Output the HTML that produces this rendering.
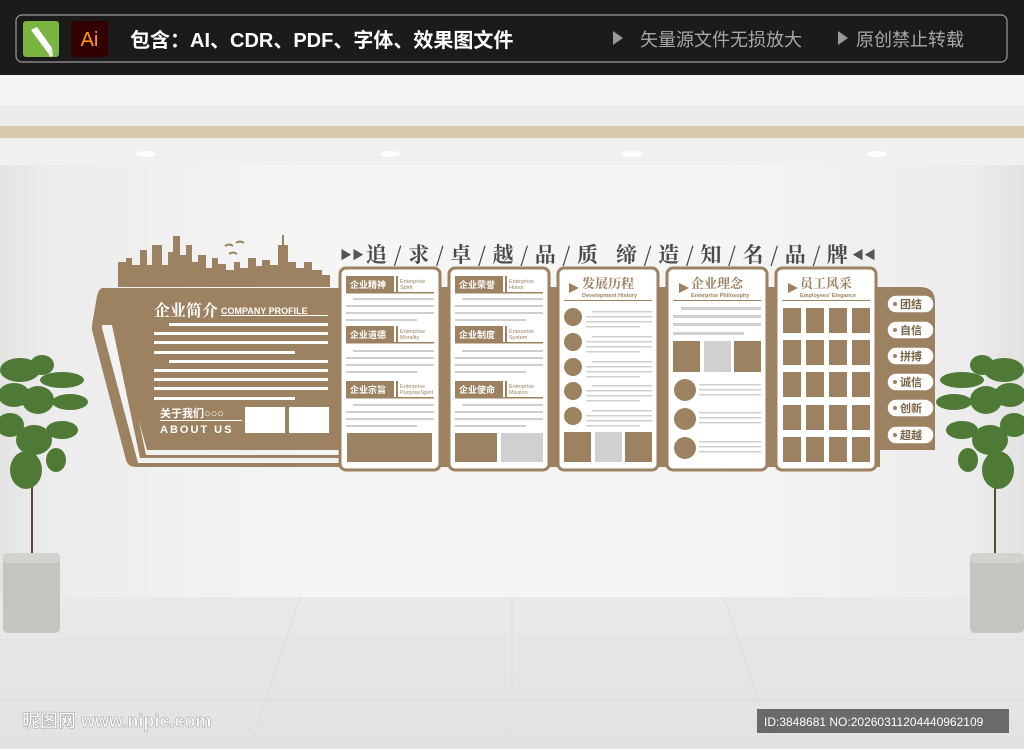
<!DOCTYPE html>
<html><head><meta charset="utf-8"><style>
html,body{margin:0;padding:0;width:1024px;height:749px;overflow:hidden;background:#eee}
svg{display:block}
text{font-family:"Liberation Sans","Noto Sans CJK SC",sans-serif}
.s{font-family:"Noto Serif CJK SC","Liberation Serif",serif;font-weight:bold}
</style></head><body>
<svg width="1024" height="749" viewBox="0 0 1024 749" xmlns="http://www.w3.org/2000/svg">
<defs>
<linearGradient id="wall" x1="0" x2="1" y1="0" y2="0">
<stop offset="0" stop-color="#e4e4e4"/><stop offset="0.05" stop-color="#ececec"/><stop offset="0.3" stop-color="#f5f5f5"/><stop offset="0.7" stop-color="#f5f5f5"/><stop offset="0.95" stop-color="#ececec"/><stop offset="1" stop-color="#e2e2e2"/></linearGradient>
<linearGradient id="floor" x1="0" x2="0" y1="0" y2="1"><stop offset="0" stop-color="#e9e9e9"/><stop offset="1" stop-color="#e2e2e2"/></linearGradient>
</defs>
<rect x="0" y="75" width="1024" height="90" fill="#ebebe9"/>
<rect x="0" y="75" width="1024" height="30" fill="#f3f3f1"/>
<rect x="0" y="126" width="1024" height="12" fill="#d8c7aa"/>
<rect x="0" y="138" width="1024" height="27" fill="#f0f0ee"/>
<g fill="#fff"><ellipse cx="146" cy="154" rx="10" ry="3"/><ellipse cx="390" cy="154" rx="10" ry="3"/><ellipse cx="632" cy="154" rx="10" ry="3"/><ellipse cx="877" cy="154" rx="10" ry="3"/></g>
<rect x="0" y="165" width="1024" height="432" fill="url(#wall)"/>
<rect x="0" y="597" width="1024" height="152" fill="url(#floor)"/>
<g stroke="#dcdcdc" stroke-width="1"><line x1="0" y1="640" x2="1024" y2="640"/><line x1="0" y1="700" x2="1024" y2="700"/><line x1="300" y1="597" x2="250" y2="749"/><line x1="512" y1="597" x2="512" y2="749"/><line x1="724" y1="597" x2="774" y2="749"/></g>

<rect x="0" y="0" width="1024" height="75" fill="#1b1b1b"/>
<rect x="16" y="15" width="991" height="47" rx="6" fill="none" stroke="#9a9a9a" stroke-width="1.2"/>
<rect x="23" y="21" width="36" height="36" rx="3" fill="#79b540"/>
<path d="M31 30 L37 27 L52 48 L48 53 Z" fill="#fff"/><path d="M48 53 L50 57 L53 56 L52 48Z" fill="#e8e8e8"/>
<rect x="71" y="21" width="37" height="36" rx="3" fill="#300" /><text x="89.5" y="46" font-size="20" fill="#ff9a00" text-anchor="middle">Ai</text>
<text x="130" y="47" font-size="20" font-weight="bold" fill="#fff">包含：AI、CDR、PDF、字体、效果图文件</text>
<path d="M613 31 L623 38 L613 45Z" fill="#999"/><text x="640" y="46" font-size="18" fill="#a8a8a8">矢量源文件无损放大</text>
<path d="M838 31 L848 38 L838 45Z" fill="#999"/><text x="856" y="46" font-size="18" fill="#a8a8a8">原创禁止转载</text>

<path d="M118 287 L118 262 L126 262 L126 258 L132 258 L132 265 L140 265 L140 250 L147 250 L147 265 L152 265 L152 245 L162 245 L162 265 L168 265 L168 252 L173 252 L173 236 L180 236 L180 255 L186 255 L186 245 L192 245 L192 262 L198 262 L198 255 L206 255 L206 268 L212 268 L212 258 L218 258 L218 264 L226 264 L226 270 L234 270 L234 262 L240 262 L240 268 L248 268 L248 258 L256 258 L256 266 L262 266 L262 260 L270 260 L270 265 L278 265 L278 245 L282 245 L282 235 L284 235 L284 245 L288 245 L288 262 L296 262 L296 268 L304 268 L304 262 L312 262 L312 270 L322 270 L322 275 L330 275 L330 287Z" fill="#9c8260"/>
<path d="M225 246 q4 -3 8 0 M236 243 q4 -3 8 0 M229 254 q4 -3 8 0" stroke="#9c8260" stroke-width="2" fill="none"/>
<path d="M98 322 L118 322 L146 455 L345 455 L345 467 L136 467 Q128 467 126 460 L92 330 Q91 322 98 322Z" fill="#9c8260"/>
<path d="M102 325 L112 325 L140 458 L343 458 L343 463 L138 463 L102 328Z" fill="#f2f2f2"/>
<path d="M103 288 L345 288 L345 450 L147 450 L112 325 L92 325 L97 296 Q99 288 103 288Z" fill="#9c8260"/>
<text class="s" x="154" y="316" font-size="16" fill="#fff">企业简介</text>
<text x="221" y="314" font-size="9" fill="#fff" font-weight="bold">COMPANY PROFILE</text>
<rect x="221" y="315" width="107" height="1" fill="#fff"/>
<g fill="#fff"><rect x="169" y="323" width="159" height="3"/><rect x="154" y="332" width="174" height="3"/><rect x="154" y="341" width="174" height="3"/><rect x="154" y="351" width="141" height="3"/><rect x="169" y="360" width="159" height="3"/><rect x="154" y="369" width="174" height="3"/><rect x="154" y="378" width="174" height="3"/><rect x="154" y="387" width="174" height="3"/><rect x="154" y="397" width="141" height="3"/>
<rect x="245" y="407" width="40" height="26"/><rect x="289" y="407" width="40" height="26"/></g>
<text x="160" y="417" font-size="11" font-weight="bold" fill="#fff">关于我们○○○</text>
<rect x="160" y="420" width="82" height="1" fill="#fff"/>
<text x="160" y="433" font-size="11" font-weight="bold" fill="#fff" letter-spacing="2">ABOUT US</text>

<rect x="340" y="287" width="540" height="180" fill="#9c8260"/>
<path d="M870 287 L920 287 Q935 287 935 302 L935 450 L870 450Z" fill="#9c8260"/>
<text x="340" y="259" font-size="12" fill="#555">▶▶</text>
<text class="s" x="366" y="262" font-size="21" fill="#4a4a4a" textLength="482" lengthAdjust="spacing">追/求/卓/越/品/质 缔/造/知/名/品/牌</text>
<text x="852" y="259" font-size="12" fill="#555">◀◀</text>

<g fill="#fff" stroke="#9c8260" stroke-width="3">
<rect x="340" y="268" width="100" height="202" rx="6"/><rect x="449" y="268" width="100" height="202" rx="6"/><rect x="558" y="268" width="100" height="202" rx="6"/><rect x="667" y="268" width="100" height="202" rx="6"/><rect x="776" y="268" width="100" height="202" rx="6"/>
</g>
<g font-size="8">
<g fill="#9c8260"><rect x="346" y="276" width="48" height="16"/><rect x="346" y="326" width="48" height="16"/><rect x="346" y="381" width="48" height="16"/>
<rect x="455" y="276" width="48" height="16"/><rect x="455" y="326" width="48" height="16"/><rect x="455" y="381" width="48" height="16"/>
<rect x="396" y="276" width="2" height="16"/><rect x="505" y="276" width="2" height="16"/><rect x="396" y="326" width="2" height="16"/><rect x="505" y="326" width="2" height="16"/><rect x="396" y="381" width="2" height="16"/><rect x="505" y="381" width="2" height="16"/>
<rect x="346" y="292" width="88" height="1.5"/><rect x="346" y="342" width="88" height="1.5"/><rect x="346" y="397" width="88" height="1.5"/>
<rect x="455" y="292" width="88" height="1.5"/><rect x="455" y="342" width="88" height="1.5"/><rect x="455" y="397" width="88" height="1.5"/>
<rect x="347" y="433" width="85" height="29"/><rect x="455" y="433" width="42" height="29"/></g>
<rect x="501" y="433" width="42" height="29" fill="#d0d0d0"/>
<g fill="#fff" font-size="9" font-weight="bold"><text x="350" y="288">企业精神</text><text x="350" y="338">企业道德</text><text x="350" y="393">企业宗旨</text><text x="459" y="288">企业荣誉</text><text x="459" y="338">企业制度</text><text x="459" y="393">企业使命</text></g>
<g fill="#9c8260" font-size="5.5"><text x="400" y="283">Enterprise</text><text x="400" y="289">Spirit</text><text x="400" y="333">Enterprise</text><text x="400" y="339">Morality</text><text x="400" y="388">Enterprise</text><text x="400" y="394">PurposeSpirit</text>
<text x="509" y="283">Enterprise</text><text x="509" y="289">Honor</text><text x="509" y="333">Enterprise</text><text x="509" y="339">System</text><text x="509" y="388">Enterprise</text><text x="509" y="394">Mission</text></g>
<g fill="#cfcfcf">
<rect x="353" y="298" width="81" height="2"/><rect x="346" y="305" width="88" height="2"/><rect x="346" y="312" width="88" height="2"/><rect x="346" y="319" width="71" height="2"/>
<rect x="353" y="350" width="81" height="2"/><rect x="346" y="357" width="88" height="2"/><rect x="346" y="364" width="88" height="2"/><rect x="346" y="371" width="71" height="2"/>
<rect x="353" y="404" width="81" height="2"/><rect x="346" y="411" width="88" height="2"/><rect x="346" y="418" width="88" height="2"/><rect x="346" y="425" width="71" height="2"/>
<rect x="462" y="298" width="81" height="2"/><rect x="455" y="305" width="88" height="2"/><rect x="455" y="312" width="88" height="2"/><rect x="455" y="319" width="71" height="2"/>
<rect x="462" y="350" width="81" height="2"/><rect x="455" y="357" width="88" height="2"/><rect x="455" y="364" width="88" height="2"/><rect x="455" y="371" width="71" height="2"/>
<rect x="462" y="404" width="81" height="2"/><rect x="455" y="411" width="88" height="2"/><rect x="455" y="418" width="88" height="2"/><rect x="455" y="425" width="71" height="2"/>
</g>
</g>
<g fill="#9c8260">
<path d="M569 283 L579 288 L569 293Z"/><path d="M679 283 L689 288 L679 293Z"/><path d="M788 283 L798 288 L788 293Z"/>
<rect x="564" y="300" width="88" height="1"/><rect x="673" y="300" width="88" height="1"/><rect x="782" y="300" width="88" height="1"/>
</g>
<g fill="#9c8260" font-size="13"><text class="s" x="582" y="288">发展历程</text><text class="s" x="691" y="288">企业理念</text><text class="s" x="800" y="288">员工风采</text></g>
<g fill="#9c8260" font-size="5.5" font-weight="bold"><text x="582" y="297">Development History</text><text x="691" y="297">Enterprise Philosophy</text><text x="800" y="297">Employees' Elegance</text></g>
<g fill="#9c8260"><circle cx="573" cy="317" r="9"/><circle cx="573" cy="342" r="9"/><circle cx="573" cy="367" r="9"/><circle cx="573" cy="391" r="9"/><circle cx="573" cy="416" r="9"/>
<rect x="564" y="432" width="27" height="30"/><rect x="625" y="432" width="27" height="30"/></g>
<rect x="595" y="432" width="27" height="30" fill="#d0d0d0"/>
<g fill="#cfcfcf">
<rect x="592" y="311" width="60" height="1.5"/><rect x="586" y="316" width="66" height="1.5"/><rect x="586" y="321" width="66" height="1.5"/><rect x="586" y="326" width="54" height="1.5"/>
<rect x="592" y="336" width="60" height="1.5"/><rect x="586" y="341" width="66" height="1.5"/><rect x="586" y="346" width="66" height="1.5"/><rect x="586" y="351" width="54" height="1.5"/>
<rect x="592" y="361" width="60" height="1.5"/><rect x="586" y="366" width="66" height="1.5"/><rect x="586" y="371" width="66" height="1.5"/><rect x="586" y="376" width="54" height="1.5"/>
<rect x="592" y="385" width="60" height="1.5"/><rect x="586" y="390" width="66" height="1.5"/><rect x="586" y="395" width="66" height="1.5"/><rect x="586" y="400" width="54" height="1.5"/>
<rect x="592" y="410" width="60" height="1.5"/><rect x="586" y="415" width="66" height="1.5"/><rect x="586" y="420" width="66" height="1.5"/><rect x="586" y="425" width="54" height="1.5"/>
<rect x="681" y="307" width="80" height="3"/><rect x="673" y="315" width="88" height="3"/><rect x="673" y="323" width="88" height="3"/><rect x="673" y="332" width="71" height="3"/>
<rect x="699" y="384" width="62" height="1.5"/><rect x="699" y="389" width="62" height="1.5"/><rect x="699" y="394" width="62" height="1.5"/>
<rect x="699" y="412" width="62" height="1.5"/><rect x="699" y="417" width="62" height="1.5"/><rect x="699" y="422" width="62" height="1.5"/>
<rect x="699" y="441" width="62" height="1.5"/><rect x="699" y="446" width="62" height="1.5"/><rect x="699" y="451" width="62" height="1.5"/>
</g>
<g fill="#9c8260"><rect x="673" y="341" width="27" height="31"/><rect x="734" y="341" width="27" height="31"/>
<circle cx="685" cy="390" r="11"/><circle cx="685" cy="419" r="11"/><circle cx="685" cy="448" r="11"/></g>
<rect x="704" y="341" width="27" height="31" fill="#d0d0d0"/>
<g fill="#9c8260">
<rect x="783" y="308" width="18" height="25"/><rect x="806" y="308" width="18" height="25"/><rect x="829" y="308" width="18" height="25"/><rect x="852" y="308" width="18" height="25"/>
<rect x="783" y="340" width="18" height="25"/><rect x="806" y="340" width="18" height="25"/><rect x="829" y="340" width="18" height="25"/><rect x="852" y="340" width="18" height="25"/>
<rect x="783" y="372" width="18" height="25"/><rect x="806" y="372" width="18" height="25"/><rect x="829" y="372" width="18" height="25"/><rect x="852" y="372" width="18" height="25"/>
<rect x="783" y="405" width="18" height="25"/><rect x="806" y="405" width="18" height="25"/><rect x="829" y="405" width="18" height="25"/><rect x="852" y="405" width="18" height="25"/>
<rect x="783" y="437" width="18" height="25"/><rect x="806" y="437" width="18" height="25"/><rect x="829" y="437" width="18" height="25"/><rect x="852" y="437" width="18" height="25"/>
</g>
<g fill="#fff" stroke="#9c8260" stroke-width="1.5">
<rect x="887" y="295" width="47" height="18" rx="9"/><rect x="887" y="321" width="47" height="18" rx="9"/><rect x="887" y="347" width="47" height="18" rx="9"/><rect x="887" y="373" width="47" height="18" rx="9"/><rect x="887" y="399" width="47" height="18" rx="9"/><rect x="887" y="426" width="47" height="18" rx="9"/>
</g>
<g fill="#9c8260"><circle cx="895" cy="304" r="2"/><circle cx="895" cy="330" r="2"/><circle cx="895" cy="356" r="2"/><circle cx="895" cy="382" r="2"/><circle cx="895" cy="408" r="2"/><circle cx="895" cy="435" r="2"/></g>
<g fill="#7a6446" font-size="11" font-weight="bold"><text x="900" y="308">团结</text><text x="900" y="334">自信</text><text x="900" y="360">拼搏</text><text x="900" y="386">诚信</text><text x="900" y="412">创新</text><text x="900" y="439">超越</text></g>

<!-- plants -->
<rect x="31" y="470" width="2" height="90" fill="#5a4a35"/><rect x="994" y="470" width="2" height="90" fill="#5a4a35"/>
<g fill="#4e7a36">
<ellipse cx="20" cy="370" rx="20" ry="12"/><ellipse cx="42" cy="365" rx="12" ry="10"/><ellipse cx="62" cy="380" rx="22" ry="8"/><ellipse cx="14" cy="395" rx="16" ry="12"/><ellipse cx="38" cy="400" rx="16" ry="14"/><ellipse cx="70" cy="402" rx="18" ry="8"/>
<ellipse cx="10" cy="425" rx="14" ry="12"/><ellipse cx="34" cy="440" rx="18" ry="15"/><ellipse cx="62" cy="430" rx="16" ry="9"/><ellipse cx="26" cy="470" rx="16" ry="19"/><ellipse cx="56" cy="460" rx="10" ry="12"/>
<ellipse cx="1004" cy="370" rx="20" ry="12"/><ellipse cx="982" cy="365" rx="12" ry="10"/><ellipse cx="962" cy="380" rx="22" ry="8"/><ellipse cx="1010" cy="395" rx="16" ry="12"/><ellipse cx="986" cy="400" rx="16" ry="14"/><ellipse cx="954" cy="402" rx="18" ry="8"/>
<ellipse cx="1014" cy="425" rx="14" ry="12"/><ellipse cx="990" cy="440" rx="18" ry="15"/><ellipse cx="962" cy="430" rx="16" ry="9"/><ellipse cx="998" cy="470" rx="16" ry="19"/><ellipse cx="968" cy="460" rx="10" ry="12"/>
</g>
<rect x="3" y="553" width="57" height="80" rx="5" fill="#c4c4c1"/><rect x="3" y="553" width="57" height="10" rx="4" fill="#d2d2cf"/>
<rect x="970" y="553" width="54" height="80" rx="5" fill="#c4c4c1"/><rect x="970" y="553" width="54" height="10" rx="4" fill="#d2d2cf"/>

<text x="22" y="727" font-size="18" font-weight="bold" fill="#fff" stroke="#999" stroke-width="0.5">昵图网 www.nipic.com</text>
<rect x="757" y="709" width="252" height="24" fill="#555" opacity="0.85"/>
<text x="764" y="726" font-size="12" fill="#fff">ID:3848681 NO:20260311204440962109</text>
</svg>
</body></html>
